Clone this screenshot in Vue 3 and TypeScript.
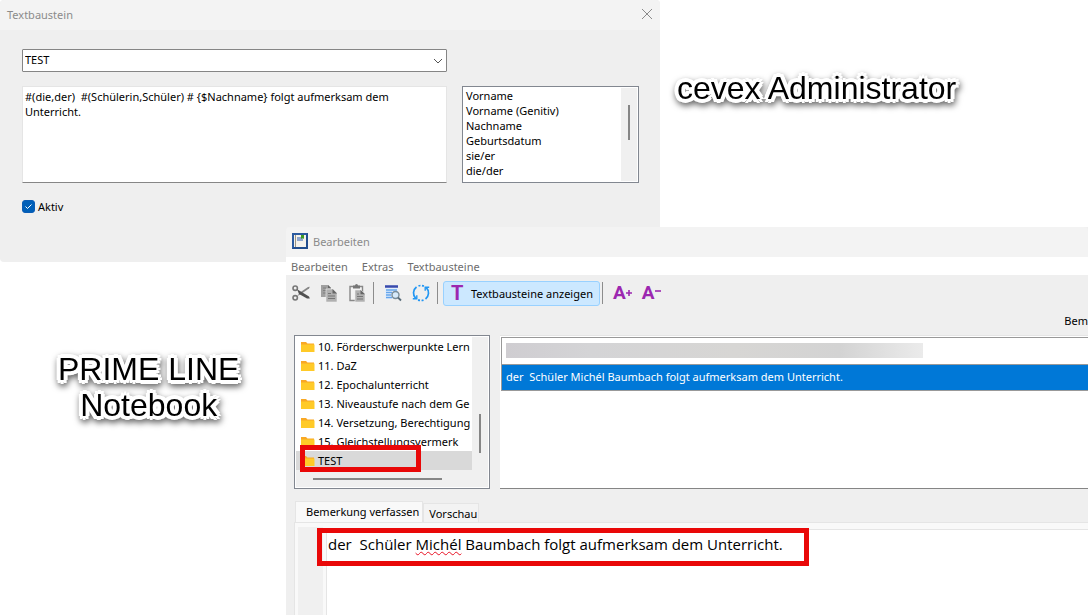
<script setup lang="ts">
import { ref } from 'vue'

const block = ref('TEST')
const active = ref(true)
const template = ref('#(die,der)  #(Schülerin,Schüler) # {$Nachname} folgt aufmerksam dem Unterricht.')
const fields = ['Vorname', 'Vorname (Genitiv)', 'Nachname', 'Geburtsdatum', 'sie/er', 'die/der']
const menus = ['Bearbeiten', 'Extras', 'Textbausteine']
const folders = [
  '10. Förderschwerpunkte Lern',
  '11. DaZ',
  '12. Epochalunterricht',
  '13. Niveaustufe nach dem Ge',
  '14. Versetzung, Berechtigung',
  '15. Gleichstellungsvermerk',
  'TEST',
]
const selected = ref('TEST')
</script>

<template>
  <main class="desktop">
    <section class="window admin" aria-label="Textbaustein">
      <header class="titlebar">
        <span>Textbaustein</span>
        <button class="close" type="button" aria-label="Schließen">
          <svg width="12" height="12" viewBox="0 0 12 12"><path d="M1 1l10 10M11 1L1 11" stroke="#8a8a8a" fill="none" /></svg>
        </button>
      </header>
      <div class="form">
        <div class="combo">
          <select v-model="block" aria-label="Name des Textbausteins">
            <option>TEST</option>
          </select>
          <svg class="chevron" width="10" height="6" viewBox="0 0 10 6"><path d="M1 1l4 4 4-4" stroke="#555" fill="none" /></svg>
        </div>
        <textarea v-model="template" aria-label="Text" spellcheck="false"></textarea>
        <div class="listbox">
          <select multiple size="6" aria-label="Platzhalter">
            <option v-for="f in fields" :key="f">{{ f }}</option>
          </select>
          <div class="track"><i class="thumb"></i></div>
        </div>
        <label class="check">
          <span class="tick">
            <input v-model="active" type="checkbox" />
            <svg v-if="active" width="13" height="13" viewBox="0 0 13 13"><path d="M3.5 6.5l2 2 4-4" stroke="#fff" fill="none" /></svg>
          </span>
          Aktiv
        </label>
      </div>
    </section>

    <section class="window notebook" aria-label="Bearbeiten">
      <header class="titlebar">
        <svg class="app" width="16" height="16" viewBox="0 0 16 16">
          <rect width="16" height="16" fill="#2a5a9f" />
          <path d="M0 16L16 0v16z" fill="#1d4482" opacity=".6" />
          <rect x="2" y="2" width="12" height="12" fill="#f4f2ec" />
          <path d="M3.5 2v12" stroke="#9a9484" />
          <rect x="5" y="4" width="6" height="4" fill="#8fa6cd" />
          <path d="M9 2h3v4l-1.500-1L9 6z" fill="#3f9b1f" />
        </svg>
        <span>Bearbeiten</span>
      </header>
      <nav class="menubar">
        <button v-for="m in menus" :key="m" type="button">{{ m }}</button>
      </nav>
      <div class="toolbar">
        <div class="group">
          <button type="button" aria-label="Ausschneiden">
            <svg width="18" height="18" viewBox="0 0 18 18" fill="none">
              <circle cx="3.200" cy="4.200" r="2.200" stroke="#777" stroke-width="1.600" />
              <circle cx="3.200" cy="13.800" r="2.200" stroke="#777" stroke-width="1.600" />
              <path d="M5 12.200L8 8.500 16 3 17.800 2.800 17 4.500 9 10z" fill="#858585" />
              <path d="M5 5.300L8 7 17 12.500 17.800 14.500 15 14.500 7 10z" fill="#505050" />
            </svg>
          </button>
          <button type="button" aria-label="Kopieren">
            <svg width="18" height="18" viewBox="0 0 18 18" fill="none">
              <path d="M1 1h7l3 3v9H1z" fill="#a0a0a0" />
              <path d="M8 1l3 3H8z" fill="#666" />
              <path d="M3 4h3M3 6.500h4M3 9h3" stroke="#808080" />
              <path d="M6 5h7l4 4v9H6z" fill="#b0b0b0" stroke="#efefef" stroke-width=".6" />
              <path d="M12.500 5l4.500 4.500h-4.500z" fill="#666" />
              <path d="M8 9.500h3M8 12h7M8 14.500h7" stroke="#757575" />
            </svg>
          </button>
          <button type="button" aria-label="Einfügen">
            <svg width="18" height="18" viewBox="0 0 18 18" fill="none">
              <path d="M2 2.500h12.500v14H2z" fill="#f4f4f4" stroke="#888" stroke-width="1.400" />
              <path d="M5 1.500h2a1.500 1.500 0 013 0h2v3H5z" fill="#777" />
              <path d="M7 6h6l4 4v8H7z" fill="#b0b0b0" stroke="#eee" stroke-width=".6" />
              <path d="M12.500 6L17 10.300h-4.500z" fill="#666" />
              <path d="M9 10h2M9 12.500h6M9 15h6" stroke="#757575" />
            </svg>
          </button>
        </div>
        <div class="group">
          <button type="button" aria-label="Suchen">
            <svg width="18" height="18" viewBox="0 0 18 18" fill="none">
              <path d="M1 1h13v14H1z" fill="#e3eefb" />
              <path d="M1 2.500h13" stroke="#3949ab" stroke-width="2.500" />
              <path d="M2 6h11M2 8.500h6M2 11h5M2 13.500h6" stroke="#64a5ec" stroke-width="1.300" />
              <circle cx="11.500" cy="11" r="3.500" fill="#d5e9fa" stroke="#788c99" stroke-width="1.400" />
              <path d="M14 13.500l3 3" stroke="#5a6d7a" stroke-width="1.800" />
            </svg>
          </button>
          <button type="button" aria-label="Aktualisieren">
            <svg width="18" height="18" viewBox="0 0 18 18" fill="none" stroke="#2196f3" stroke-width="1.700">
              <path d="M3.700 14.300A7.500 7.500 0 014.500 3" />
              <path d="M14.300 3.700A7.500 7.500 0 0113.500 15" />
              <path d="M6.500 1.900A7.500 7.500 0 0112.500 2.400" stroke-dasharray="2 1.500" />
              <path d="M11.500 16.100A7.500 7.500 0 015.500 15.600" stroke-dasharray="2 1.500" />
              <path d="M.8 14.800h4v-3.500M17.200 3.200h-4v3.500" stroke-width="1.400" />
            </svg>
          </button>
        </div>
        <div class="group toggle-group">
          <button class="toggle" type="button" aria-pressed="true"><b>T</b><span>Textbausteine anzeigen</span></button>
        </div>
        <div class="group sizes">
          <button type="button" aria-label="Schrift vergrößern"><b>A</b><svg width="6" height="6" viewBox="0 0 6 6"><path d="M0 3h6M3 0v6" stroke="#9c27b0" stroke-width="1.600" /></svg></button>
          <button type="button" aria-label="Schrift verkleinern"><b>A</b><svg class="minus" width="6" height="6" viewBox="0 0 6 6"><path d="M0 3h6" stroke="#9c27b0" stroke-width="1.600" /></svg></button>
        </div>
      </div>
      <p class="caption-row">Bem</p>
      <div class="panes">
        <div class="tree">
          <ul>
            <li v-for="f in folders" :key="f">
              <button type="button" :class="{ on: f === selected }" @click="selected = f">
                <svg width="14" height="12" viewBox="0 0 14 12"><path d="M0 1h5l1.500 1.500H13V11H0z" fill="#f9a825" /><path d="M0 3.500h13.500V11H0z" fill="#ffca28" /></svg>
                <span>{{ f }}</span>
              </button>
            </li>
          </ul>
          <div class="vtrack"><i></i></div>
          <div class="htrack"><i></i></div>
          <div class="mark mark-tree"></div>
        </div>
        <div class="remarks">
          <div class="remark"><i class="redacted"></i></div>
          <div class="remark current">der&nbsp; Schüler Michél Baumbach folgt aufmerksam dem Unterricht.</div>
        </div>
      </div>
      <div class="tabs" role="tablist">
        <button class="tab active" type="button" role="tab" aria-selected="true">Bemerkung verfassen</button>
        <button class="tab" type="button" role="tab" aria-selected="false">Vorschau</button>
      </div>
      <div class="editor">
        <div class="gutter"></div>
        <div class="page" contenteditable="true" spellcheck="false" role="textbox" aria-label="Bemerkung">der&nbsp; Schüler <span class="typo">Michél</span> Baumbach folgt aufmerksam dem Unterricht.</div>
        <div class="mark mark-text"></div>
      </div>
    </section>

    <h1 class="label label-admin">cevex Administrator</h1>
    <h1 class="label label-notebook">PRIME LINE<br />Notebook</h1>
  </main>
</template>

<style>
body {
  background: #fff;
}
</style>

<style scoped>
* {
  box-sizing: border-box;
}
.desktop {
  position: relative;
  min-height: 100vh;
  overflow: hidden;
  font: 11px/15px 'Noto Sans', 'Open Sans', sans-serif;
  color: #000;
}
button,
select,
textarea {
  margin: 0;
  padding: 0;
  border: 0;
  border-radius: 0;
  background: none;
  font: inherit;
  color: inherit;
  outline: 0;
}
svg {
  display: block;
}
.window {
  position: absolute;
  background: #efefef;
  border-radius: 4px 0 0 0;
}
.admin {
  top: 0;
  left: 0;
  width: calc(100% - 428px);
  border-radius: 4px;
}
.notebook {
  top: 227px;
  right: 0;
  bottom: 0;
  left: 286px;
  display: flex;
  flex-direction: column;
}
.titlebar {
  display: flex;
  align-items: center;
  height: 30px;
  padding: 0 7px 2px;
  background: #f3f3f3;
  border-radius: 4px 4px 0 0;
  color: #8b8b8b;
}
.close {
  margin-left: auto;
}
.app {
  margin: 0 5px 0 -1px;
}
.form {
  display: grid;
  grid-template-columns: 1fr 177px;
  column-gap: 15px;
  padding: 19px 21px 48px 22px;
}
.combo {
  position: relative;
  margin-bottom: 14px;
}
.combo select {
  display: block;
  appearance: none;
  width: 100%;
  height: 23px;
  padding: 0 2px 2px;
  border: 1px solid #858585;
  border-radius: 1px;
  background: #fff;
}
.chevron {
  position: absolute;
  right: 4px;
  top: 9px;
  pointer-events: none;
}
textarea {
  grid-column: 1;
  display: block;
  width: 100%;
  height: 97px;
  padding: 2px;
  border: 1px solid #e5e5e5;
  border-bottom-color: #868686;
  background: #fff;
  resize: none;
  overflow: hidden;
}
.listbox {
  display: flex;
  height: 97px;
  padding: 1px;
  border: 1px solid #828790;
  background: #fff;
}
.listbox select {
  flex: 1;
  min-width: 0;
  height: 93px;
  overflow: hidden;
}
.listbox option {
  min-height: 15px;
  height: 15px;
  padding: 0 2px;
  line-height: 15px;
}
.track {
  width: 16px;
  padding: 17px 0 0 7px;
  background: #f0f0f0;
}
.thumb {
  display: block;
  width: 2px;
  height: 35px;
  background: #868686;
}
.check {
  display: flex;
  align-items: center;
  gap: 3px;
  justify-self: start;
  margin-top: 16px;
}
.tick {
  position: relative;
  width: 13px;
  height: 13px;
}
.tick input {
  appearance: none;
  display: block;
  width: 13px;
  height: 13px;
  margin: 0;
  border: 1px solid #0b5cb5;
  border-radius: 3px;
}
.tick input:checked {
  background: #005fb8;
}
.tick svg {
  position: absolute;
  inset: 0;
  pointer-events: none;
}
.menubar {
  display: flex;
  gap: 14px;
  height: 18px;
  padding: 0 5px;
  background: #fff;
  color: #6d6d6d;
}
.toolbar {
  display: flex;
  align-items: center;
  height: 36px;
  padding-left: 6px;
}
.group {
  display: flex;
  align-items: center;
  gap: 10px;
  height: 22px;
  padding-right: 7px;
  border-right: 1px solid #8c8c8c;
}
.group + .group {
  padding-left: 10px;
}
.group + .toggle-group {
  padding: 0 2px 0 5px;
}
.toggle {
  display: flex;
  flex: none;
  align-items: center;
  width: 157px;
  height: 25px;
  padding-left: 7px;
  border: 1px solid #99d1ff;
  border-radius: 3px;
  background: #cce8ff;
  text-align: left;
  white-space: nowrap;
}
.group b {
  font: 700 19px/22px Roboto, sans-serif;
  color: #9c27b0;
}
.group .toggle b {
  flex: none;
  width: 20px;
  font-size: 20px;
}
.group.sizes {
  border: 0;
}
.sizes button {
  display: flex;
  align-items: center;
}
.minus {
  margin-bottom: 4px;
}
.caption-row {
  margin: 2px 0 7px;
  text-align: right;
}
.panes {
  display: flex;
  gap: 10px;
  padding-left: 8px;
}
.tree {
  position: relative;
  display: grid;
  grid-template: auto 17px / 1fr 16px;
  width: 196px;
  padding: 1px;
  border: 1px solid #828790;
  background: #fff;
}
.tree ul {
  margin: 0;
  padding: 0;
  list-style: none;
  min-width: 0;
  overflow: hidden;
}
.tree li button {
  display: flex;
  align-items: center;
  gap: 3px;
  width: 100%;
  height: 19px;
  padding-left: 5px;
  white-space: nowrap;
  overflow: hidden;
}
.tree li svg {
  flex: none;
}
.tree .on {
  background: #d9d9d9;
}
.vtrack,
.htrack {
  background: #f0f0f0;
}
.vtrack {
  padding: 77px 0 0 7px;
}
.vtrack i {
  display: block;
  width: 2px;
  height: 39px;
  background: #868686;
}
.htrack {
  grid-column: 1 / 3;
  padding: 8px 0 0 17px;
}
.htrack i {
  display: block;
  width: 129px;
  height: 2px;
  background: #868686;
}
.mark {
  position: absolute;
  border: 5px solid #e90808;
  pointer-events: none;
}
.mark-tree {
  left: 5px;
  bottom: 16px;
  width: 121px;
  height: 27px;
}
.remarks {
  flex: 1;
  min-width: 0;
  padding: 1px 0 0 1px;
  border: 1px solid #e5e5e5;
  border-width: 1px 0 1px 0;
  border-bottom-color: #858585;
  background: #fff;
}
.remark {
  display: flex;
  align-items: center;
  height: 27px;
  padding: 0 0 2px 4px;
  border: 1px solid #999;
  border-width: 1px 0 0 1px;
  white-space: nowrap;
}
.remark.current {
  border-bottom-width: 1px;
  background: #0078d7;
  color: #fff;
}
.redacted {
  width: 417px;
  height: 15px;
  background: linear-gradient(90deg, #cfcdd1, #d4d4d6 20%, #d7d6d4 55%, #d3d3d3 80%, #ebebeb);
}
.tabs {
  display: flex;
  align-items: flex-end;
  height: 33px;
  padding-left: 9px;
}
.tab {
  height: 19px;
  padding: 0 1px 0 5px;
  border: 1px solid #e5e5e5;
  border-bottom: 0;
  background: #f3f3f3;
}
.tab.active {
  height: 21px;
  padding: 0 3px 2px 10px;
  background: #f9f9f9;
}
.editor {
  position: relative;
  display: flex;
  flex: 1;
  gap: 3px;
  margin-left: 8px;
  padding: 4px 0 0 3px;
  border: 1px solid #e5e5e5;
  border-width: 1px 0 0 1px;
  background: #f9f9f9;
}
.gutter {
  width: 25px;
  background: #f0f0f0;
}
.page {
  flex: 1;
  margin-top: 2px;
  padding: 4px 0 0 1px;
  border: 1px solid #e5e5e5;
  border-width: 1px 0 0 1px;
  background: #fff;
  font: 15px/21px 'Open Sans', 'Noto Sans', sans-serif;
  white-space: nowrap;
  outline: 0;
}
.typo {
  text-decoration: underline wavy #e81123 1px;
  text-decoration-skip-ink: none;
}
.mark-text {
  top: 5px;
  left: 22px;
  width: 492px;
  height: 38px;
}
.label {
  position: absolute;
  margin: 0;
  font: 400 32px/36px 'Liberation Sans', Arial, sans-serif;
  text-align: center;
  white-space: nowrap;
  text-shadow: 4px 0 #fff, -4px 0 #fff, 0 4px #fff, 0 -4px #fff, 3px 3px #fff, -3px 3px #fff, 3px -3px #fff, -3px -3px #fff, 2px 2px #fff, -2px 2px #fff, 2px -2px #fff, -2px -2px #fff;
  filter: drop-shadow(1px 3px 3px rgba(0, 0, 0, 0.6));
}
.label-admin {
  top: 70px;
  left: 677px;
}
.label-notebook {
  top: 351px;
  left: 58px;
}
</style>
